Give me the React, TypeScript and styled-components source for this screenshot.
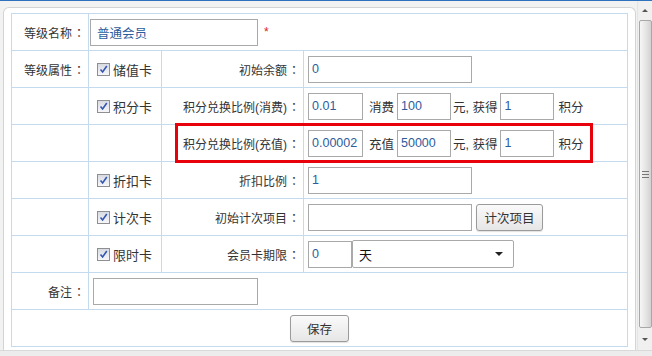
import React from 'react';
import styled, { createGlobalStyle } from 'styled-components';

const FONT = `"Liberation Sans", "Noto Sans CJK SC", sans-serif`;

const GlobalStyle = createGlobalStyle`
  html, body {
    margin: 0;
    padding: 0;
  }
  body {
    font-family: ${FONT};
    font-size: 12px;
    color: #333;
    background: #f2f2f2;
  }
`;

const Screen = styled.div`
  width: 652px;
  height: 356px;
  display: flex;
  flex-direction: column;
  overflow: hidden;
  background: #f2f2f2;
  border-top: 1px solid #2f71bd;
  box-sizing: border-box;
`;

const Body = styled.div`
  display: flex;
  flex: 1;
  min-height: 0;
`;

const Panel = styled.div`
  flex: 1;
  margin: 6px 0 0 3px;
  padding: 5px 7px 0 7px;
  background: #fff;
  border: 1px solid #d4d4d4;
  border-bottom: none;
  border-radius: 6px 6px 0 0;
`;

const FormWrap = styled.div`
  position: relative;
  width: 617px;
`;

const Grid = styled.table`
  width: 617px;
  border-collapse: collapse;
  table-layout: fixed;
  border: 1px solid #c4daee;
`;

const Cell = styled.td<{ $align?: 'left' | 'right' | 'center'; $pl?: number }>`
  height: 36px;
  padding: 0 4px 0 ${(p) => (p.$pl ?? 4)}px;
  border: 1px solid #c4daee;
  text-align: ${(p) => p.$align ?? 'left'};
  vertical-align: middle;
  white-space: nowrap;
`;

const Label = styled(Cell).attrs({ $align: 'right' })`
  padding-right: 3px;
  font-size: 12px;
`;

/* full-width colon drawn centred in its box, as the original font does */
const Colon = styled.span`
  font-family: "Noto Sans CJK TC", "Noto Sans CJK SC", sans-serif;
  margin-left: 1px;
`;

const Inline = styled.div`
  display: flex;
  align-items: center;
`;

const Field = styled.input<{ $w: number; $pl?: number }>`
  width: ${(p) => p.$w}px;
  height: 27px;
  box-sizing: border-box;
  margin: 0;
  padding: 0 3px 0 ${(p) => p.$pl ?? 3}px;
  border: 1px solid #a9a9a9;
  background: #fff;
  font: 12.5px ${FONT};
  color: #2d5c9c;
  outline: none;
`;

const Unit = styled.span<{ $ml?: number; $mr?: number }>`
  margin: 0 ${(p) => p.$mr ?? 4}px 0 ${(p) => p.$ml ?? 4}px;
  color: #333;
  font-size: 12.5px;
`;

const Star = styled.span`
  margin-left: 6px;
  color: #e02020;
  font-size: 12px;
`;

const CheckLabel = styled.label`
  display: inline-flex;
  align-items: center;
  gap: 3px;
  font-size: 13px;
`;

const Box = styled.span`
  display: inline-flex;
  align-items: center;
  justify-content: center;
  width: 13px;
  height: 13px;
  box-sizing: border-box;
  border: 1px solid #8d8f93;
  background: linear-gradient(#d9dbe2, #f7f7f9);
`;

const Button = styled.button<{ $w: number }>`
  width: ${(p) => p.$w}px;
  height: 27px;
  margin: 0;
  padding: 0;
  border: 1px solid #9b9b9b;
  border-radius: 3px;
  background: linear-gradient(#fafafa, #e6e6e6);
  box-shadow: 0 1px 1px rgba(0, 0, 0, 0.12);
  font: 12.5px ${FONT};
  color: #333;
`;

const Select = styled.div`
  width: 162px;
  height: 28px;
  box-sizing: border-box;
  display: flex;
  align-items: center;
  justify-content: space-between;
  padding: 0 10px 0 6px;
  border: 1px solid #a9a9a9;
  border-radius: 2px;
  background: #fff;
  color: #111;
  font-size: 13px;
`;

const Caret = styled.span`
  width: 0;
  height: 0;
  border-left: 4px solid transparent;
  border-right: 4px solid transparent;
  border-top: 4px solid #222;
`;

const Highlight = styled.div`
  position: absolute;
  left: 164px;
  top: 110px;
  width: 418px;
  height: 40px;
  box-sizing: border-box;
  border: 3px solid #e8000b;
  pointer-events: none;
`;

const ScrollTrack = styled.div`
  width: 15px;
  margin-left: 1px;
  display: flex;
  flex-direction: column;
  align-items: center;
  background: #f0f0f0;
  border-left: 1px solid #e4e4e4;
  box-sizing: border-box;
`;

const Arrow = styled.div<{ $down?: boolean }>`
  height: ${(p) => (p.$down ? 22 : 19)}px;
  display: flex;
  align-items: center;
  justify-content: center;
  &::after {
    content: '';
    border-left: 3px solid transparent;
    border-right: 3px solid transparent;
    ${(p) => (p.$down ? 'border-top: 3px solid #555;' : 'border-bottom: 3px solid #555;')}
  }
`;

const Thumb = styled.div`
  flex: 1;
  width: 13px;
  box-sizing: border-box;
  border: 1px solid #a8a8a8;
  border-radius: 2px;
  background: linear-gradient(to right, #f6f6f6, #e4e4e4 55%, #d2d2d2);
  display: flex;
  flex-direction: column;
  align-items: center;
  justify-content: center;
  gap: 2px;
`;

const Grip = styled.span`
  width: 7px;
  height: 1px;
  background: #777;
`;

const BottomStrip = styled.div`
  height: 6px;
  background: #ececec;
  border-top: 1px solid #d9d9d9;
  box-sizing: border-box;
`;

const Check = ({ text }: { text: string }) => (
  <CheckLabel>
    <Box>
      <svg width="9" height="9" viewBox="0 0 9 9">
        <path d="M1.5 4.5 L3.6 7 L7.8 1" fill="none" stroke="#3357b0" strokeWidth="1.6" />
      </svg>
    </Box>
    {text}
  </CheckLabel>
);

const Caption = ({ text }: { text?: string }) => (
  <Label>
    {text && (
      <>
        {text}
        <Colon>：</Colon>
      </>
    )}
  </Label>
);

const Ratio = ({ a, unit, b }: { a: string; unit: string; b: string }) => (
  <Inline>
    <Field $w={55} value={a} readOnly />
    <Unit $ml={6} $mr={3}>{unit}</Unit>
    <Field $w={54} value={b} readOnly />
    <Unit $ml={2} $mr={3}>元, 获得</Unit>
    <Field $w={54} value="1" readOnly />
    <Unit $ml={4}>积分</Unit>
  </Inline>
);

export default function App() {
  return (
    <>
      <GlobalStyle />
      <Screen>
        <Body>
          <Panel>
            <FormWrap>
              <Grid>
                <colgroup>
                  <col style={{ width: 77 }} />
                  <col style={{ width: 73 }} />
                  <col style={{ width: 142 }} />
                  <col style={{ width: 324 }} />
                </colgroup>
                <tbody>
                  <tr>
                    <Caption text="等级名称" />
                    <Cell colSpan={3} $pl={1}>
                      <Inline>
                        <Field $w={168} $pl={6} value="普通会员" readOnly />
                        <Star>*</Star>
                      </Inline>
                    </Cell>
                  </tr>
                  <tr>
                    <Caption text="等级属性" />
                    <Cell $pl={8}><Check text="储值卡" /></Cell>
                    <Caption text="初始余额" />
                    <Cell><Field $w={164} value="0" readOnly /></Cell>
                  </tr>
                  <tr>
                    <Caption />
                    <Cell $pl={8}><Check text="积分卡" /></Cell>
                    <Caption text="积分兑换比例(消费)" />
                    <Cell><Ratio a="0.01" unit="消费" b="100" /></Cell>
                  </tr>
                  <tr>
                    <Caption />
                    <Cell />
                    <Caption text="积分兑换比例(充值)" />
                    <Cell><Ratio a="0.00002" unit="充值" b="50000" /></Cell>
                  </tr>
                  <tr>
                    <Caption />
                    <Cell $pl={8}><Check text="折扣卡" /></Cell>
                    <Caption text="折扣比例" />
                    <Cell><Field $w={164} value="1" readOnly /></Cell>
                  </tr>
                  <tr>
                    <Caption />
                    <Cell $pl={8}><Check text="计次卡" /></Cell>
                    <Caption text="初始计次项目" />
                    <Cell>
                      <Inline>
                        <Field $w={164} value="" readOnly />
                        <Button $w={67} style={{ marginLeft: 4 }}>计次项目</Button>
                      </Inline>
                    </Cell>
                  </tr>
                  <tr>
                    <Caption />
                    <Cell $pl={8}><Check text="限时卡" /></Cell>
                    <Caption text="会员卡期限" />
                    <Cell>
                      <Inline>
                        <Field $w={44} value="0" readOnly />
                        <Select>
                          天
                          <Caret />
                        </Select>
                      </Inline>
                    </Cell>
                  </tr>
                  <tr>
                    <Caption text="备注" />
                    <Cell colSpan={3}><Field $w={165} value="" readOnly /></Cell>
                  </tr>
                  <tr>
                    <Cell colSpan={4} $align="center">
                      <Button $w={59}>保存</Button>
                    </Cell>
                  </tr>
                </tbody>
              </Grid>
              <Highlight />
            </FormWrap>
          </Panel>
          <ScrollTrack>
            <Arrow />
            <Thumb>
              <Grip />
              <Grip />
              <Grip />
            </Thumb>
            <Arrow $down />
          </ScrollTrack>
        </Body>
        <BottomStrip />
      </Screen>
    </>
  );
}
